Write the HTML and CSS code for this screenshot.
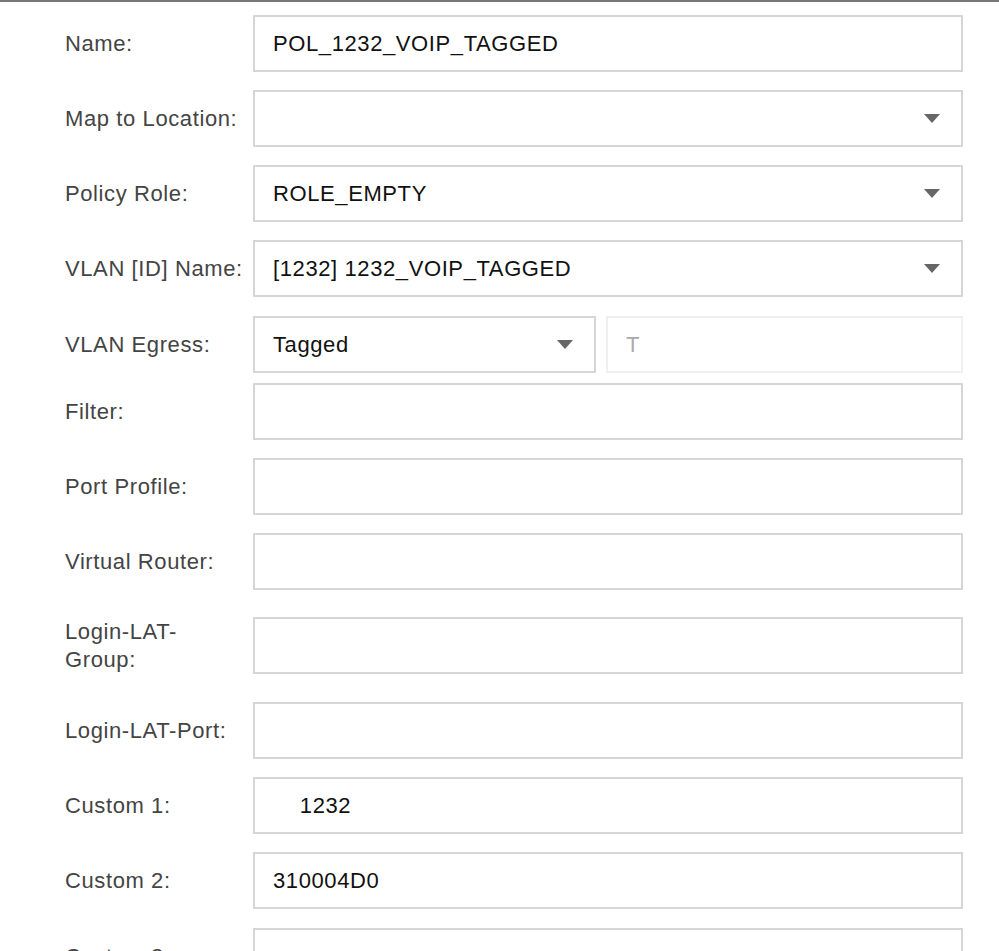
FILE: index.html
```html
<!DOCTYPE html>
<html>
<head>
<meta charset="utf-8">
<link rel="stylesheet" href="styles.css">
</head>
<body>
<div class="topbar"></div>
<form class="form">
  <div class="row">
    <label class="label">Name:</label>
    <div class="field"><span class="value">POL_1232_VOIP_TAGGED</span></div>
  </div>
  <div class="row">
    <label class="label">Map to Location:</label>
    <div class="field select"><span class="value"></span><span class="caret"></span></div>
  </div>
  <div class="row">
    <label class="label">Policy Role:</label>
    <div class="field select"><span class="value">ROLE_EMPTY</span><span class="caret"></span></div>
  </div>
  <div class="row row-vlan">
    <label class="label">VLAN [ID] Name:</label>
    <div class="field select"><span class="value">[1232] 1232_VOIP_TAGGED</span><span class="caret"></span></div>
  </div>
  <div class="row row-egress">
    <label class="label">VLAN Egress:</label>
    <div class="pair">
      <div class="field select egress"><span class="value">Tagged</span><span class="caret"></span></div>
      <div class="field disabled"><span class="value">T</span></div>
    </div>
  </div>
  <div class="row">
    <label class="label">Filter:</label>
    <div class="field"><span class="value"></span></div>
  </div>
  <div class="row">
    <label class="label">Port Profile:</label>
    <div class="field"><span class="value"></span></div>
  </div>
  <div class="row">
    <label class="label">Virtual Router:</label>
    <div class="field"><span class="value"></span></div>
  </div>
  <div class="row row-tall">
    <label class="label">Login-LAT-<br>Group:</label>
    <div class="field"><span class="value"></span></div>
  </div>
  <div class="row">
    <label class="label">Login-LAT-Port:</label>
    <div class="field"><span class="value"></span></div>
  </div>
  <div class="row">
    <label class="label">Custom 1:</label>
    <div class="field"><span class="value">    1232</span></div>
  </div>
  <div class="row row-c2">
    <label class="label">Custom 2:</label>
    <div class="field"><span class="value">310004D0</span></div>
  </div>
  <div class="row">
    <label class="label">Custom 3:</label>
    <div class="field"><span class="value"></span></div>
  </div>
</form>
</body>
</html>
```
FILE: styles.css
```css
html, body {
  margin: 0;
  padding: 0;
  background: #fff;
}
body {
  font-family: "Liberation Sans", Arial, Helvetica, sans-serif;
  font-size: 22px;
  letter-spacing: 0.6px;
  overflow: hidden;
  height: 951px;
}
.topbar {
  height: 2px;
  background: #777;
}
.form {
  display: flex;
  flex-direction: column;
  gap: 18px;
  padding: 13px 36px 0 65px;
}
.row {
  display: flex;
  align-items: center;
}
.row-vlan { margin-bottom: 1px; }
.row-egress { margin-bottom: -8px; }
.row-tall { margin: 9px 0 10px; }
.row-c2 { margin-bottom: 1px; }
.label {
  width: 188px;
  flex: none;
  color: #444;
  line-height: 28px;
}
.field {
  flex: 1;
  box-sizing: border-box;
  height: 57px;
  border: 2px solid #d6d6d6;
  display: flex;
  align-items: center;
  padding: 0 19px 0 18px;
  color: #111;
  background: #fff;
  min-width: 0;
}
.value {
  flex: 1;
  white-space: pre;
}
.caret {
  width: 0;
  height: 0;
  border-left: 8.5px solid transparent;
  border-right: 8.5px solid transparent;
  border-top: 9px solid #666;
  margin-right: 2px;
}
.pair {
  flex: 1;
  display: flex;
  gap: 10px;
}
.egress {
  flex: none;
  width: 343px;
}
.disabled {
  border-color: #efefef;
  color: #aaa;
}
```
